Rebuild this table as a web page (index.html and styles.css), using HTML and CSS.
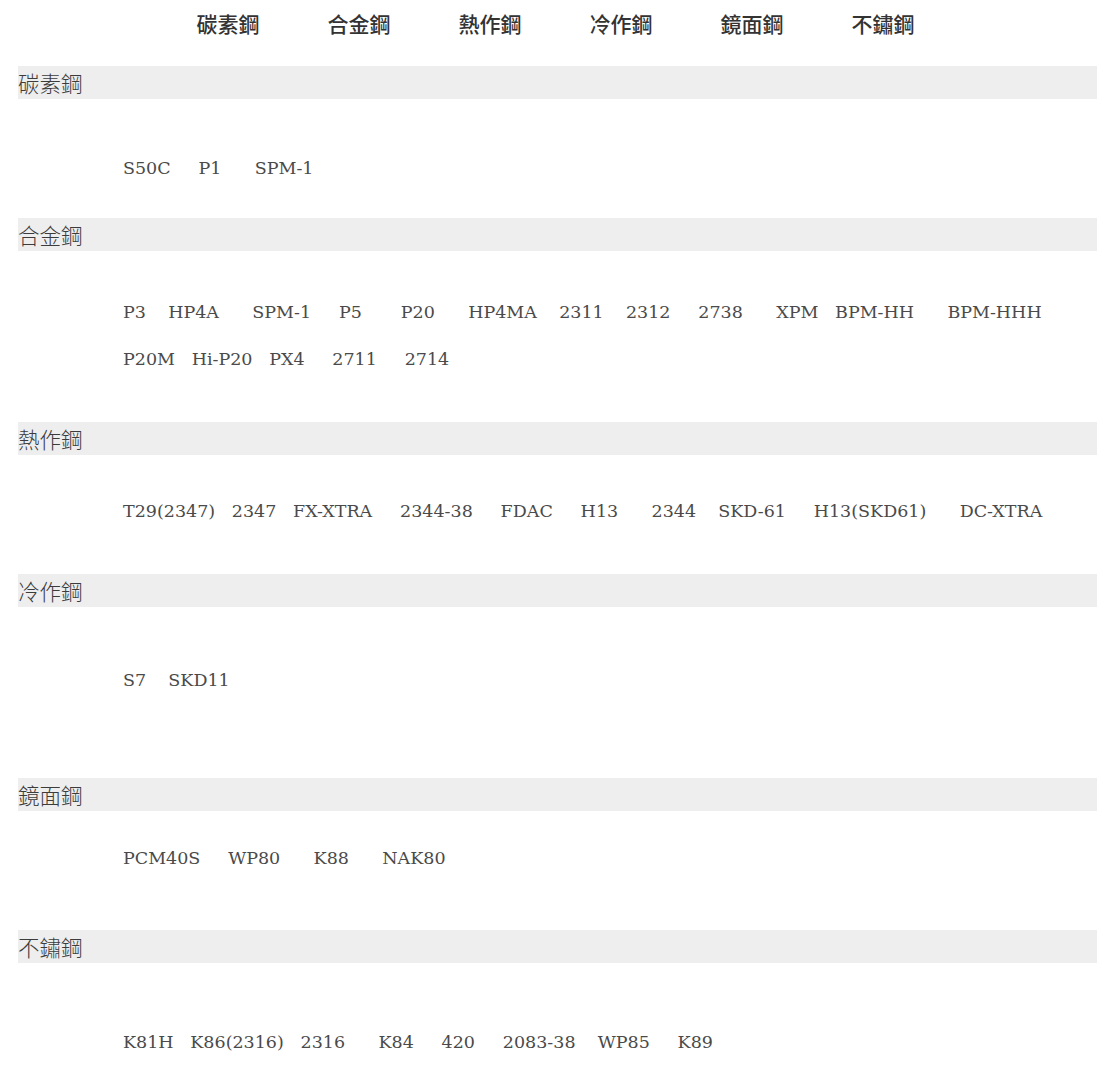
FILE: index.html
```html
<!DOCTYPE html>
<html lang="zh-Hant">
<head>
<meta charset="utf-8">
<title>鋼材分類</title>
<link rel="stylesheet" href="styles.css">
</head>
<body>
<nav class="topnav">
  <a class="nav-link" href="#carbon">碳素鋼</a>
  <a class="nav-link" href="#alloy">合金鋼</a>
  <a class="nav-link" href="#hot">熱作鋼</a>
  <a class="nav-link" href="#cold">冷作鋼</a>
  <a class="nav-link" href="#mirror">鏡面鋼</a>
  <a class="nav-link" href="#stainless">不鏽鋼</a>
</nav>
<main class="page">
  <section class="group" id="carbon">
    <h2 class="group-title">碳素鋼</h2>
    <div class="group-body body-carbon">
      <p class="grades">S50C     P1      SPM-1</p>
    </div>
  </section>
  <section class="group" id="alloy">
    <h2 class="group-title">合金鋼</h2>
    <div class="group-body body-alloy">
      <p class="grades">P3    HP4A      SPM-1     P5       P20      HP4MA    2311    2312     2738      XPM   BPM-HH      BPM-HHH</p>
      <p class="grades">P20M   Hi-P20   PX4     2711     2714</p>
    </div>
  </section>
  <section class="group" id="hot">
    <h2 class="group-title">熱作鋼</h2>
    <div class="group-body body-hot">
      <p class="grades">T29(2347)   2347   FX-XTRA     2344-38     FDAC     H13      2344    SKD-61     H13(SKD61)      DC-XTRA</p>
    </div>
  </section>
  <section class="group" id="cold">
    <h2 class="group-title">冷作鋼</h2>
    <div class="group-body body-cold">
      <p class="grades">S7    SKD11</p>
    </div>
  </section>
  <section class="group" id="mirror">
    <h2 class="group-title">鏡面鋼</h2>
    <div class="group-body body-mirror">
      <p class="grades">PCM40S     WP80      K88      NAK80</p>
    </div>
  </section>
  <section class="group" id="stainless">
    <h2 class="group-title">不鏽鋼</h2>
    <div class="group-body body-stainless">
      <p class="grades">K81H   K86(2316)   2316      K84     420     2083-38    WP85     K89</p>
    </div>
  </section>
</main>
</body>
</html>
```
FILE: styles.css
```css
html, body {
  margin: 0;
  padding: 0;
  background: #ffffff;
}

body {
  font-family: "Noto Sans CJK TC", "Noto Sans", sans-serif;
  color: #333333;
}

.topnav {
  display: flex;
  justify-content: center;
  gap: 68px;
  height: 46px;
  align-items: center;
  margin-bottom: 20px;
}

.nav-link {
  font-size: 21px;
  line-height: 46px;
  font-weight: 500;
  color: #333333;
  text-decoration: none;
  font-family: "Noto Sans CJK TC", sans-serif;
}

.page {
  padding: 0 14px 0 18px;
}

.group-title {
  margin: 0;
  height: 33px;
  line-height: 33px;
  background: #eeeeee;
  font-size: 21.5px;
  font-weight: 300;
  color: #3c3c3c;
  font-family: "Noto Sans CJK TC", sans-serif;
}

.group-body {
  padding-left: 105px;
}

.grades {
  margin: 0;
  white-space: pre;
  font-family: "DejaVu Serif", "Liberation Serif", serif;
  font-size: 17.5px;
  line-height: 47px;
  color: #4a4a4a;
}

.body-carbon { padding-top: 45.5px; padding-bottom: 26.5px; }
.body-alloy { padding-top: 37.5px; padding-bottom: 39.5px; }
.body-hot { padding-top: 32.5px; padding-bottom: 39.5px; }
.body-cold { padding-top: 49.5px; padding-bottom: 74.5px; }
.body-mirror { padding-top: 23.5px; padding-bottom: 48.5px; }
.body-stainless { padding-top: 55.5px; padding-bottom: 10px; }
```
